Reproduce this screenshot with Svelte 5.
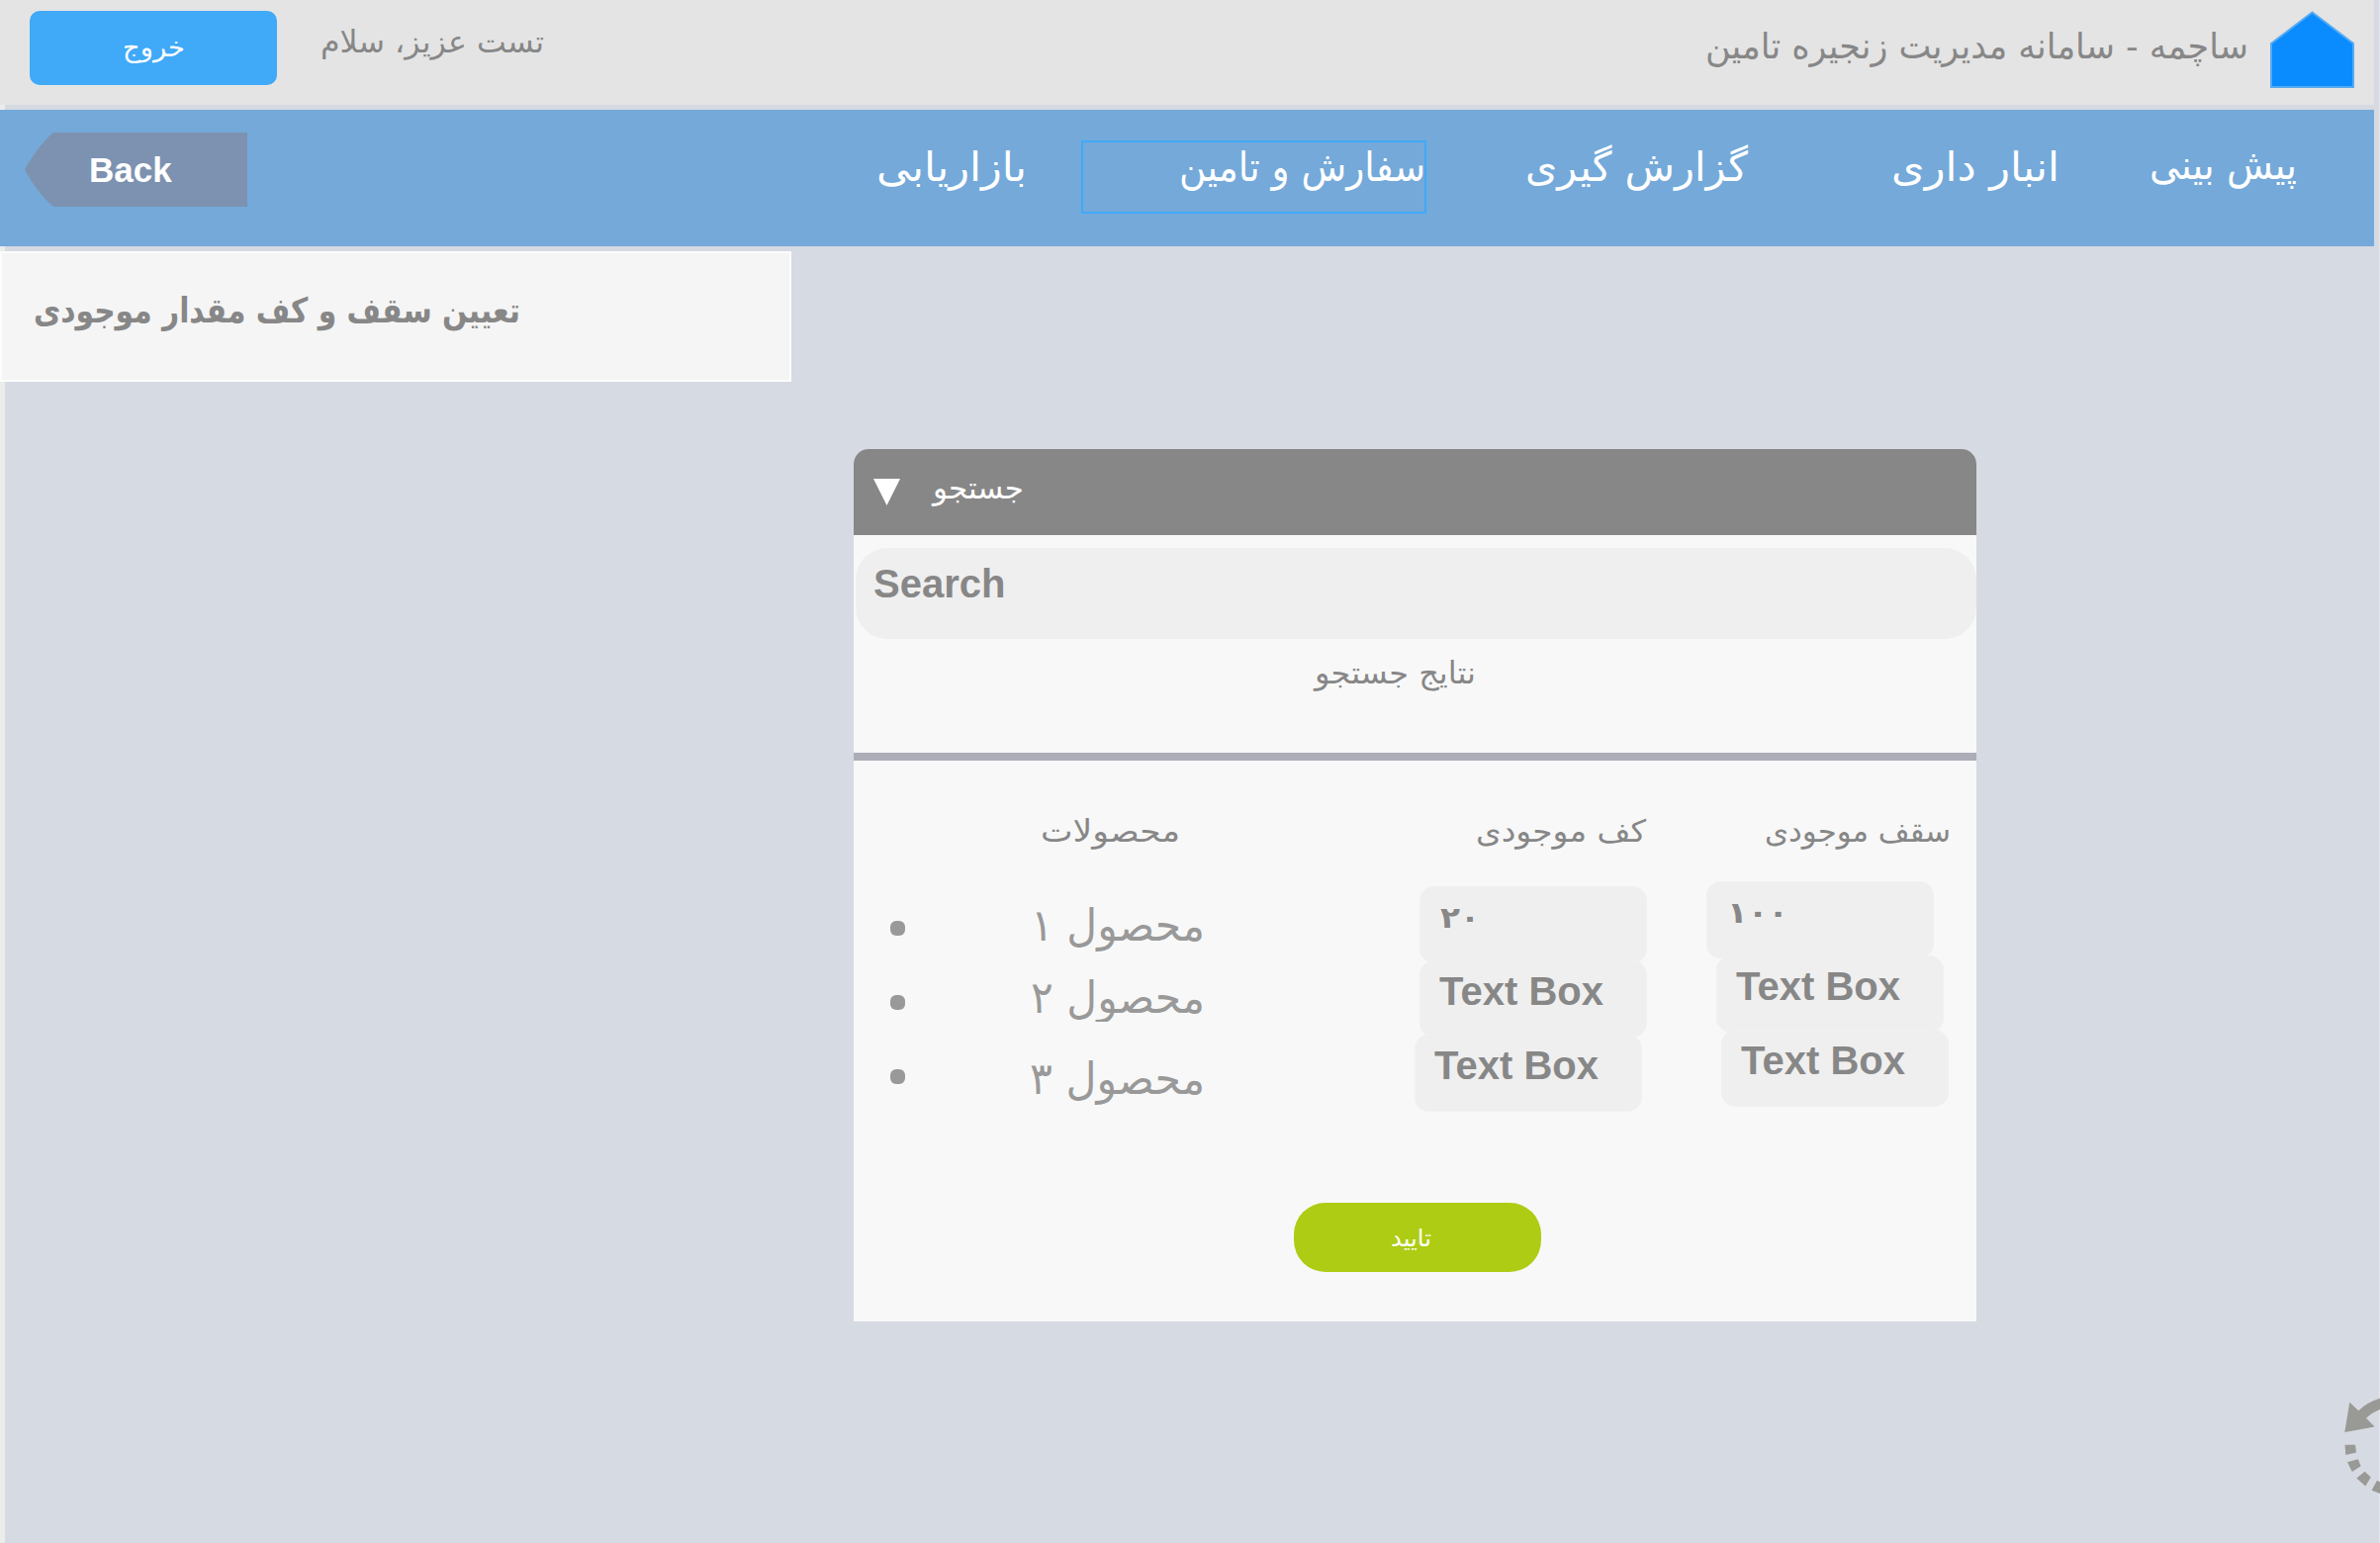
<script>
  const nav = [
    { label: 'بازاریابی', width: 152 },
    { label: 'سفارش و تامین', width: 249, active: true },
    { label: 'گزارش گیری', width: 225 },
    { label: 'انبار داری', width: 170 },
    { label: 'پیش بینی', width: 149 },
  ];
  const products = [
    { label: 'محصول ۱', width: 176 },
    { label: 'محصول ۲', width: 176 },
    { label: 'محصول ۳', width: 177 },
  ];
  const floors = ['۲۰', 'Text Box', 'Text Box'];
  const ceilings = ['۱۰۰', 'Text Box', 'Text Box'];
</script>

<!-- Persian label set to a fixed width; the baseline sits 40px below the top -->
{#snippet label(text, width, cls)}
  <svg class="label {cls}" {width} height="60" role="img" aria-label={text}>
    <text x={width / 2} y="40" text-anchor="middle" textLength={width} lengthAdjust="spacingAndGlyphs">{text}</text>
  </svg>
{/snippet}

{#snippet fields(values, cls)}
  <div class="fields {cls}">
    {#each values as value}
      <div class="field">
        {#if value === 'Text Box'}
          {value}
        {:else}
          {@render label(value, value.length === 2 ? 40 : 62, 'number')}
        {/if}
      </div>
    {/each}
  </div>
{/snippet}

<div class="page">
  <header>
    <button class="logout">{@render label('خروج', 63, 's27')}</button>
    <div class="greeting">{@render label('تست عزیز، سلام', 226, 's31')}</div>
    <div class="brand">{@render label('ساچمه - سامانه مدیریت زنجیره تامین', 549, 's36')}</div>
    <svg class="home" width="85" height="78" viewBox="0 0 85 78">
      <path d="M1 33 L42.5 1.5 L84 33 V77 H1 Z" fill="#0a8cff" stroke="#55aaf2" stroke-width="2" />
    </svg>
  </header>

  <nav>
    <div class="back">
      <svg class="arrow" width="29" height="75" viewBox="0 0 29 75">
        <path d="M30 0 H29 C18 9 5 27 0 37.5 C5 48 18 66 29 75 H30 Z" fill="#7d92b0" />
      </svg>
      <span>Back</span>
    </div>
    <div class="links">
      {#each nav as item}
        <div class="link" class:active={item.active}>{@render label(item.label, item.width, 's41')}</div>
      {/each}
    </div>
  </nav>

  <div class="subtitle">{@render label('تعیین سقف و کف مقدار موجودی', 492, 's35 bold')}</div>

  <main>
    <div class="card-head">
      <svg width="27" height="27" viewBox="0 0 27 27"><path d="M0 0 H27 L13.5 27 Z" fill="#fff" /></svg>
      <div>{@render label('جستجو', 92, 's31')}</div>
    </div>
    <div class="search">Search</div>
    <div class="results">{@render label('نتایج جستجو', 163, 's31')}</div>
    <div class="table">
      <div class="bullets"><i></i><i></i><i></i></div>
      <div class="names">
        <div class="th">{@render label('محصولات', 141, 's31')}</div>
        {#each products as p}
          <div class="name">{@render label(p.label, p.width, 's45')}</div>
        {/each}
      </div>
      <div class="col floor">
        <div class="th">{@render label('کف موجودی', 172, 's31')}</div>
        {@render fields(floors, 'floors')}
      </div>
      <div class="col ceiling">
        <div class="th">{@render label('سقف موجودی', 188, 's31')}</div>
        {@render fields(ceilings, 'ceilings')}
      </div>
    </div>
    <button class="confirm">{@render label('تایید', 41, 's24')}</button>
  </main>

  <svg class="rotate" width="36" height="100" viewBox="2370 1412 36 100">
    <g fill="#999996">
      <path d="M2370.3 1448 L2375.3 1417.7 L2384.3 1426.3 Q2393 1417.5 2406 1413.7 V1425 Q2398 1428 2392 1433.8 L2400.6 1442.6 Z" />
      <path d="M2370.5 1460.8 H2381 L2382 1468.5 L2371.3 1471 Z" />
      <path d="M2373 1478.2 L2383.8 1475.3 L2386.6 1482.3 L2377.8 1488 Z" />
      <path d="M2382.3 1494.5 L2390.6 1487.7 L2396.7 1493.5 L2391.3 1502.5 Z" />
      <path d="M2397.6 1506.7 L2403 1496.8 L2406 1498.2 V1510 Z" />
    </g>
  </svg>
</div>

<style>
  :global(body) { background: #d6dae2; }
  .page {
    position: relative;
    box-sizing: border-box;
    width: 2406px;
    height: 1560px;
    overflow: hidden;
    background: linear-gradient(90deg, #ececec 5px, #d6dae2 5px, #d6dae2 2405px, #e6e7ea 2405px);
    font-family: 'Liberation Sans', 'DejaVu Sans', sans-serif;
    color: #878787;
  }
  button { border: 0; padding: 0; font: inherit; display: block; }
  .label { display: block; overflow: visible; font-family: 'DejaVu Sans', sans-serif; fill: #878787; flex: none; }
  .label text { direction: rtl; }
  .s24 { font-size: 24px; fill: #fff; }
  .s27 { font-size: 27px; fill: #fff; }
  .s31 { font-size: 31px; }
  .s35 { font-size: 35px; }
  .s36 { font-size: 36px; }
  .s41 { font-size: 41px; fill: #fff; }
  .s45 { font-size: 45px; fill: #999; }
  .bold { font-weight: bold; }
  .number { font-size: 30px; font-weight: bold; }

  header { display: flex; width: 2400px; height: 106px; background: #e4e4e4; }
  .logout {
    box-sizing: border-box; width: 250px; height: 75px; margin: 11px 0 0 30px;
    padding: 0 0 0 94px; border-radius: 10px; background: #40a9f8;
  }
  .greeting { margin: 13px 0 0 44px; }
  .brand { margin: 19px 22px 0 auto; }
  .home { margin: 11px 20px 0 0; }

  nav { display: flex; width: 2400px; height: 138px; margin-top: 5px; background: #74a9d9; }
  .back { display: flex; height: 75px; margin: 23px 0 0 25px; font-size: 35px; font-weight: bold; line-height: 42px; color: #fff; }
  .back span { box-sizing: border-box; width: 196px; height: 75px; padding: 17px 0 0 36px; background: #7d92b0; }
  .links { display: flex; align-items: flex-start; margin-left: auto; padding: 31px 78px 0 0; }
  .link { padding-top: 1px; }
  .link:nth-child(3) { margin-left: 100px; }
  .link:nth-child(4) { margin-left: 145px; }
  .link:nth-child(5) { margin: -2px 0 0 91px; }
  .link.active { box-sizing: border-box; width: 349px; height: 74px; margin-left: 55px; padding: 0 0 0 97px; border: 2px solid #40a9f8; }
  .active :global(svg) { margin-top: -1px; }

  .subtitle {
    box-sizing: border-box; width: 800px; height: 132px; margin-top: 5px;
    padding: 30px 0 0 32px; border: 2px solid #fcfcfc; background: #f5f5f5;
  }

  main {
    width: 1135px; height: 882px; margin: 68px 0 0 863px;
    border-radius: 15px 15px 0 0; background: #f8f8f8; overflow: hidden;
  }
  .card-head { display: flex; height: 87px; padding-left: 20px; background: #878787; }
  .card-head > svg { margin-top: 30px; }
  .card-head > div { margin: 10px 0 0 33px; }
  .card-head .label { fill: #fff; }
  .search {
    box-sizing: border-box; height: 92px; margin: 13px 0 0 2px; padding: 13px 0 0 18px;
    border-radius: 32px; background: #efefef; font-size: 40px; font-weight: bold; line-height: 46px;
  }
  .results { height: 115px; border-bottom: 8px solid #adadb8; }
  .results .label { margin: 0 0 0 466px; padding-top: 5px; }
  .table { display: flex; height: 447px; }
  .bullets { display: flex; flex-direction: column; gap: 60px; width: 15px; margin: 162px 0 0 37px; }
  .bullets i { width: 15px; height: 15px; border-radius: 6px; background: #999; }
  .th { height: 60px; margin-top: 42px; }
  .names { display: flex; flex-direction: column; align-items: flex-end; width: 174px; margin-left: 129px; }
  .names .th { margin-right: 25px; }
  .name { height: 60px; margin-top: 40px; }
  .name:nth-child(3) { height: 49px; margin-top: 13px; overflow: hidden; }
  .name:nth-child(4) { margin-top: 33px; }
  .floor { margin-left: 212px; }
  .floor .th { height: 59px; margin-left: 62px; }
  .ceiling { margin-left: 60px; }
  .ceiling .th { height: 59px; margin-left: 59px; }
  .floors { margin-top: 26px; }
  .ceilings { margin-top: 21px; }
  .field {
    box-sizing: border-box; width: 230px; height: 78px; margin-left: 5px; padding: 8px 0 0 20px;
    border: 0; border-radius: 15px; background: #efefef; box-shadow: inset 0 0 0 1px #f1f1f1;
    font-size: 40px; font-weight: bold; line-height: 46px; white-space: nowrap;
  }
  .field + .field { margin-top: -3px; }
  .field .label { margin: -6px 0 0 1px; }
  .floors .field:nth-child(3) { margin-left: 0; }
  .ceilings .field:nth-child(1) { margin-left: 0; }
  .ceilings .field:nth-child(2) { margin-left: 10px; }
  .ceilings .field:nth-child(3) { margin-left: 15px; }
  .confirm {
    box-sizing: border-box; width: 250px; height: 70px; margin-left: 445px;
    padding: 0 0 0 98px; border-radius: 32px; background: #aecc13;
  }
  /* svg boxes are centred by the button, so pull the baselines up */
  .logout .label { margin-top: -3px; }
  .confirm .label { margin-top: -3px; }
  /* floats over the page's right edge */
  .rotate { position: absolute; right: 0; top: 1412px; }
</style>
